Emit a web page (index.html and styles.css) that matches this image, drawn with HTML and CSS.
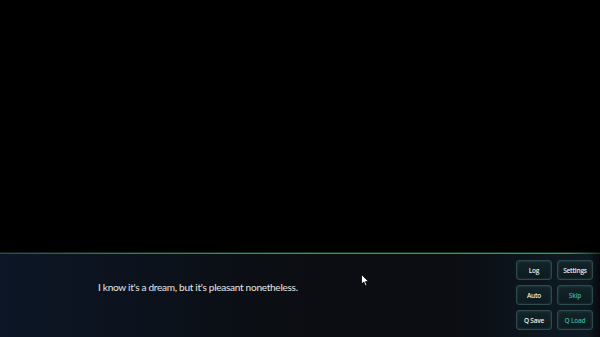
FILE: index.html
```html
<!DOCTYPE html>
<html>
<head>
<meta charset="utf-8">
<link rel="stylesheet" href="styles.css">
</head>
<body>
<div class="screen">
  <div class="stage"></div>
  <div class="panel">
    <div class="line"></div>
    <div class="body">
      <p class="dialog">I know it's a dream, but it's pleasant nonetheless.</p>
      <div class="menu">
        <button class="btn">Log</button>
        <button class="btn">Settings</button>
        <button class="btn">Auto</button>
        <button class="btn dim">Skip</button>
        <button class="btn">Q Save</button>
        <button class="btn dim">Q Load</button>
      </div>
    </div>
  </div>
  <svg class="cursor" width="9" height="13" viewBox="0 0 9 13"><path d="M0.5 0.5 L0.5 10 L2.8 8 L4.5 12 L6 11.3 L4.4 7.6 L7.6 7.6 Z" fill="#fff" stroke="#000" stroke-width="0.8"/></svg>
</div>
</body>
</html>
```
FILE: styles.css
```css
html, body {
  margin: 0;
  padding: 0;
  background: #000;
}
.screen {
  position: relative;
  width: 600px;
  height: 337px;
  overflow: hidden;
  display: flex;
  flex-direction: column;
  background: #000;
}
.stage {
  height: 252px;
  flex: none;
}
.panel {
  flex: 1;
  display: flex;
  flex-direction: column;
  background: linear-gradient(90deg, #0c1626 0%, #0c121c 25%, #0b0e13 45%, #0b0d12 75%, #0d161e 90%, #0e1b22 98%, #070a0c 100%);
}
.line {
  height: 2px;
  flex: none;
  background: linear-gradient(180deg, #0e3a1e 0 1px, #2aa352 1px 2px);
  box-shadow: 0 1px 0 rgba(20, 90, 45, 0.55);
  -webkit-mask-image: linear-gradient(90deg, rgba(0,0,0,0.45) 0%, rgba(0,0,0,0.8) 20%, #000 50%, #000 95%, rgba(0,0,0,0.3) 100%);
  mask-image: linear-gradient(90deg, rgba(0,0,0,0.45) 0%, rgba(0,0,0,0.8) 20%, #000 50%, #000 95%, rgba(0,0,0,0.3) 100%);
}
.body {
  flex: 1;
  display: flex;
  align-items: flex-start;
}
.dialog {
  margin: 27px 0 0 98px;
  flex: 1;
  font-family: Lato, "Open Sans", sans-serif;
  font-size: 10.1px;
  letter-spacing: -0.3px;
  color: #e6e6e6;
}
.menu {
  display: grid;
  grid-template-columns: 36px 36px;
  grid-auto-rows: 20px;
  column-gap: 5px;
  row-gap: 5px;
  margin: 6px 7px 0 0;
}
.btn {
  margin: 0;
  padding: 0;
  border: 1px solid #2f4a4c;
  border-radius: 3px;
  background: linear-gradient(180deg, #13252a 0%, #0c1a1e 100%);
  box-shadow: inset 0 0 3px rgba(80, 140, 140, 0.35);
  color: #e6efe8;
  font-family: "Open Sans", Lato, sans-serif;
  font-size: 6.5px;
  font-weight: 600;
  letter-spacing: -0.2px;
}
.btn.dim {
  color: #3fae98;
}
.cursor {
  position: absolute;
  left: 361px;
  top: 274px;
}
```
